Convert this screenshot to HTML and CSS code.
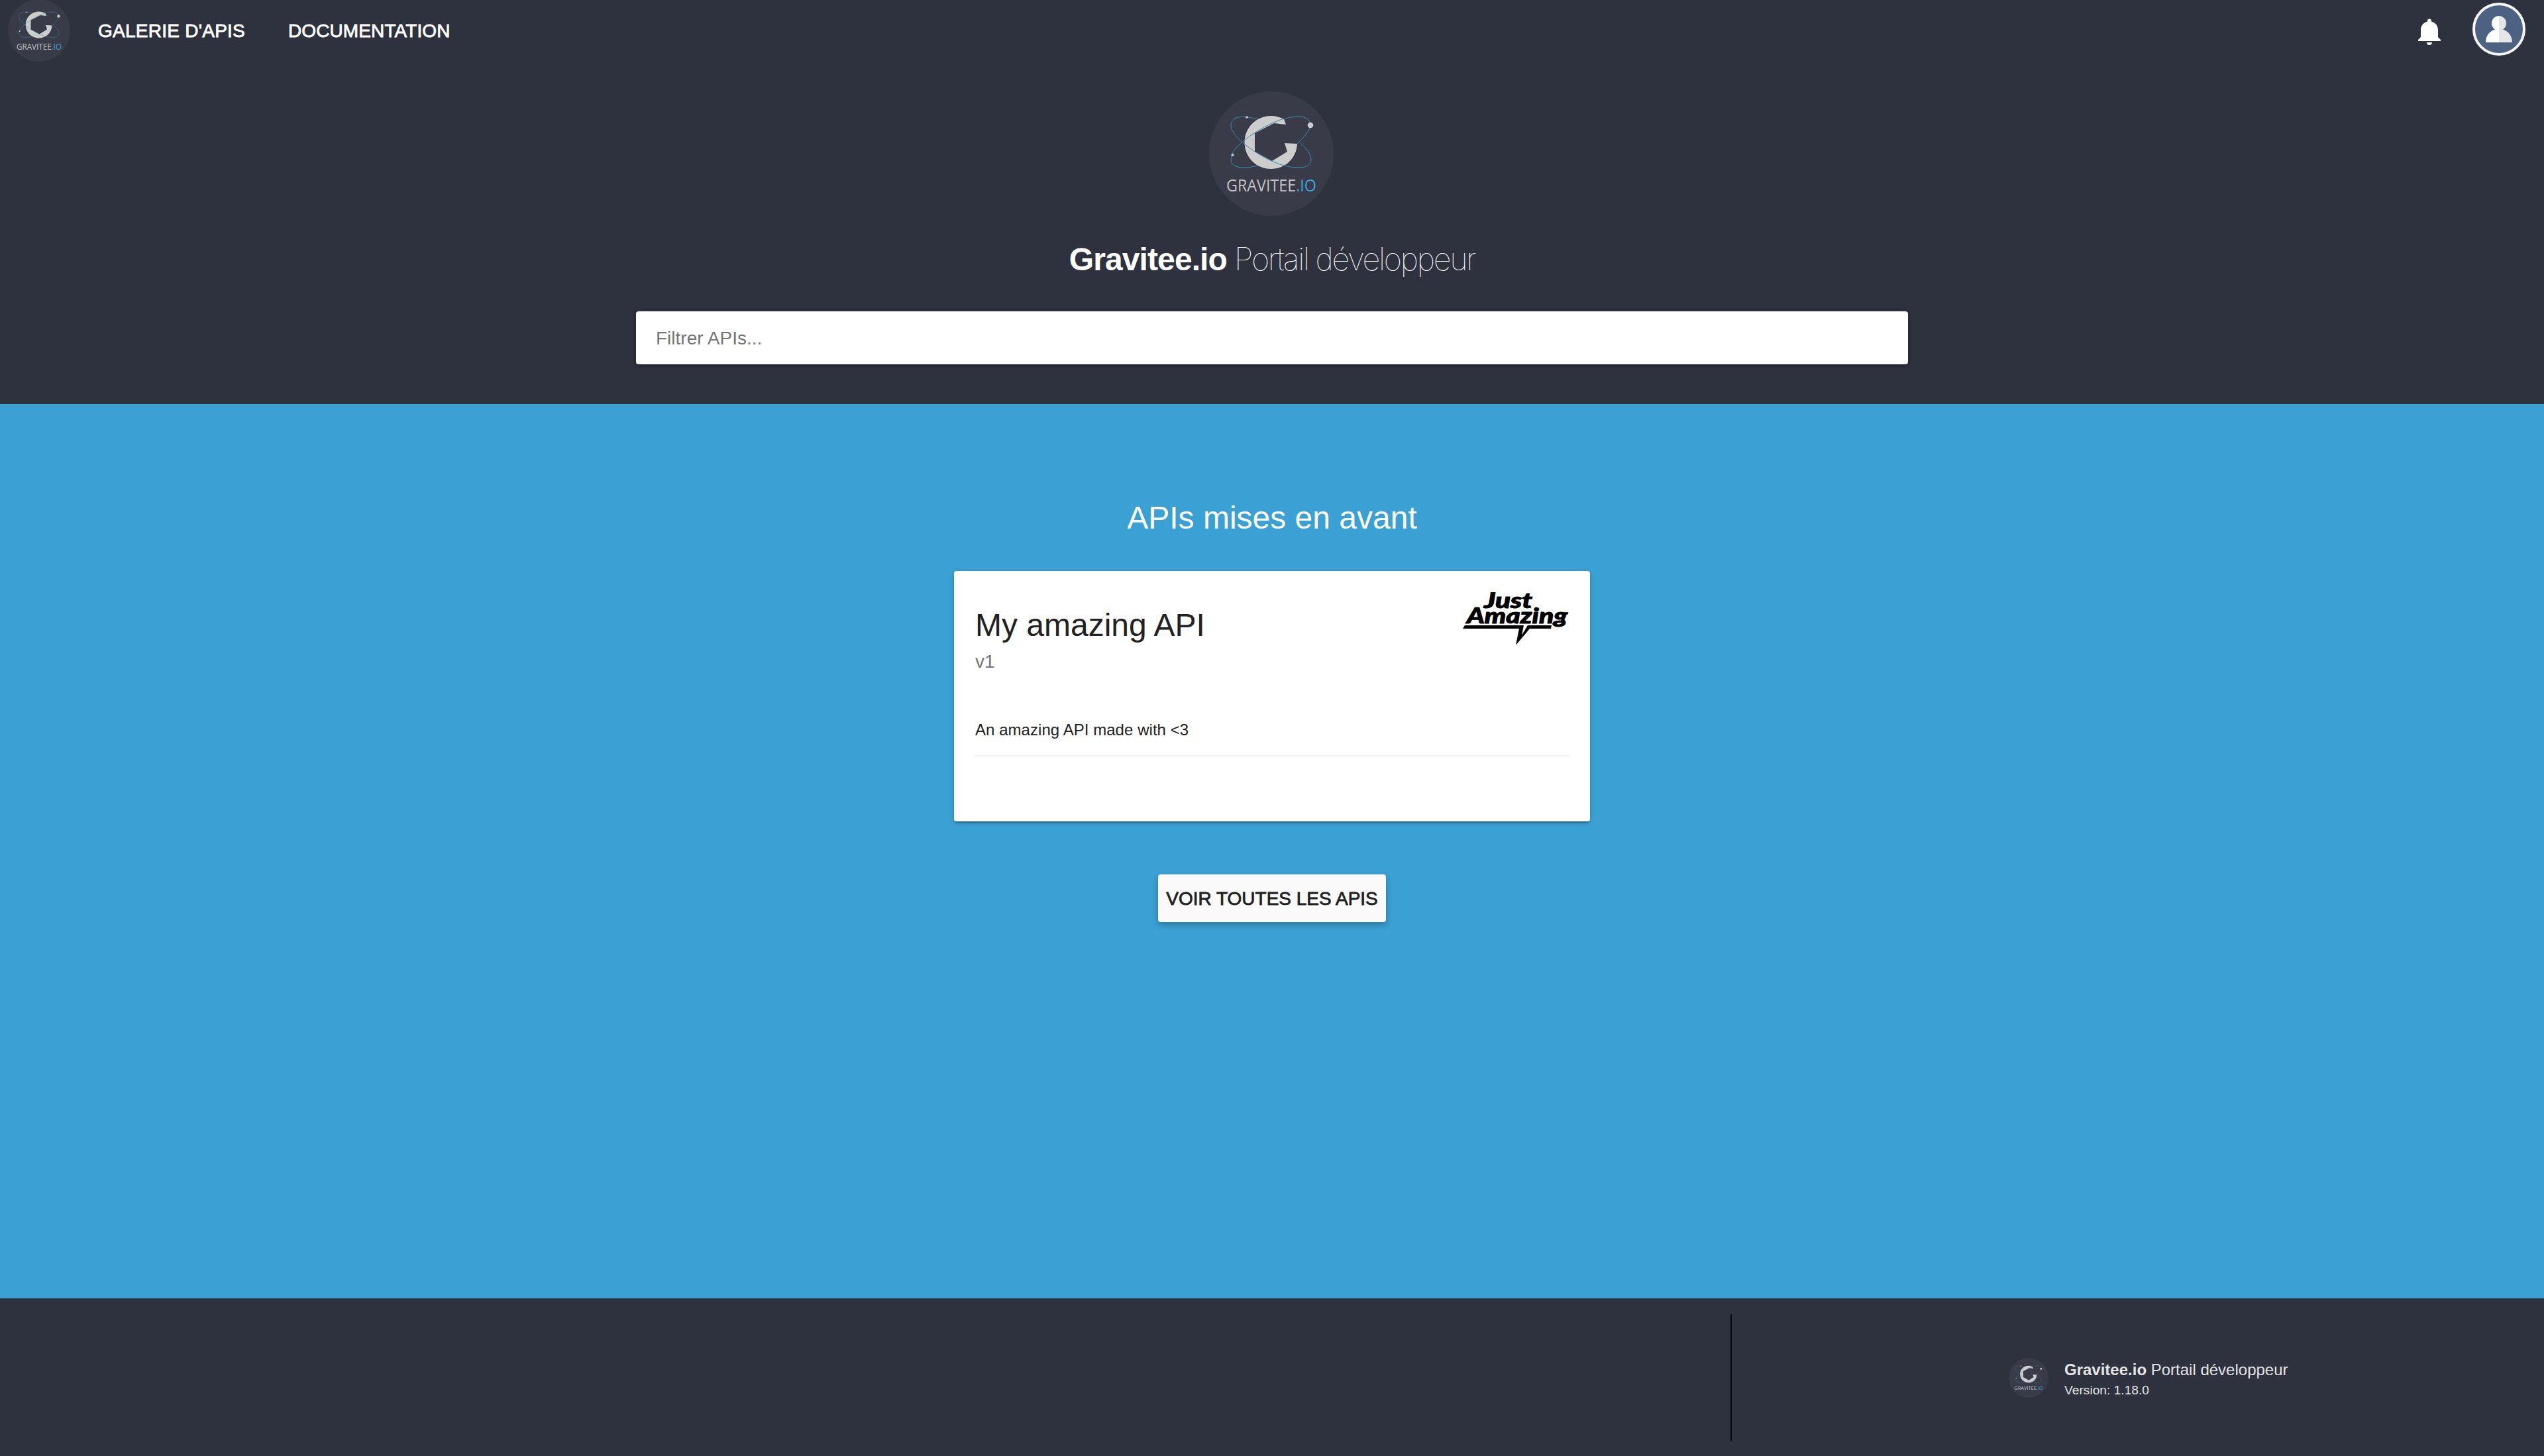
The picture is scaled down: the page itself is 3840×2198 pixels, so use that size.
FILE: index.html
```html
<!DOCTYPE html>
<html lang="fr">
<head>
<meta charset="utf-8">
<title>Gravitee.io Portail développeur</title>
<link rel="stylesheet" href="styles.css">
</head>
<body>
<svg width="0" height="0" class="defs" aria-hidden="true">
  <symbol id="gravitee" viewBox="0 0 188 188">
    <circle cx="94" cy="94" r="94" fill="#393c48"/>
    <path fill="#cdcdcd" d="M116 50L98 48L69 63V91L95 105L118 91L114 78L133 79C132 101 115 117 93.500 117C71 117 53.500 99 53.500 77C53.500 55 71 37 93.500 37C101 37 108 39 113 42Z"/>
    <g fill="none" stroke="#3889b3" stroke-width="1">
      <path d="M153 51C153 43 146 38 135 38C112 38 84 51 58 70C40 84 33 93 33 103C33 111 40 115 52 115C60 115 66 114 73 112"/>
      <path d="M73 42C66 40 59 39 52 38C40 38 33 43 33 51C33 61 44 73 62 86C87 104 113 115 135 115C147 115 154 111 154 103C154 95 147 86 137 77"/>
      <path d="M133 79C145 68 152 59 153 51"/>
    </g>
    <g fill="#cdcdcd"><circle cx="153" cy="51" r="4.300"/><circle cx="57" cy="39" r="1.800"/><circle cx="35.500" cy="96" r="2"/></g>
    <text x="26" y="151" textLength="136" lengthAdjust="spacingAndGlyphs" font-family="'Open Sans', sans-serif" font-size="25" fill="#c2c3c5">GRAVITEE<tspan fill="#36a5dd">.IO</tspan></text>
  </symbol>
</svg>

<header class="header">
  <nav class="nav">
    <svg class="nav-logo"><use href="#gravitee"/></svg>
    <a class="nav-link nav-apis">GALERIE D'APIS</a>
    <a class="nav-link">DOCUMENTATION</a>
    <div class="nav-tools">
      <svg class="bell" viewBox="0 0 34 40"><path fill="#fff" d="M14 3.500a3 3 0 0 1 6 0V4.600C26 6 30 11 30 17V28L34 32V34H0V32L4 28V17C4 11 8 6 14 4.600ZM13 36H21C21 38.500 19.500 40 17 40S13 38.500 13 36Z"/></svg>
      <svg class="avatar" viewBox="0 0 80 80"><circle cx="40" cy="40" r="38" fill="#4d6182" stroke="#f5f5f5" stroke-width="4"/><path fill="#fff" d="M40 20a11.200 11.200 0 0 0-6 20.600C26 43 20 50 20 60H40Z"/><path fill="#e6e6e6" d="M40 20a11.200 11.200 0 0 1 6 20.600C54 43 60 50 60 60H40Z"/></svg>
    </div>
  </nav>
  <div class="hero">
    <svg class="hero-logo"><use href="#gravitee"/></svg>
    <h1 class="hero-title"><b class="brand">Gravitee.io</b><span class="portal">Portail développeur</span></h1>
    <input class="search" type="text" placeholder="Filtrer APIs...">
  </div>
</header>

<main class="main">
  <h2 class="section-title">APIs mises en avant</h2>
  <article class="card">
    <div class="card-head">
      <div>
        <h3 class="card-title">My amazing API</h3>
        <p class="card-version">v1</p>
      </div>
      <svg class="card-logo" viewBox="0 0 160 80">
        <g font-family="Lato, sans-serif" font-weight="900" font-style="italic" stroke="#000" stroke-width="1">
          <text x="32" y="23.500" font-size="32" textLength="73" lengthAdjust="spacingAndGlyphs">Just</text>
          <text x="6" y="46.500" font-size="32" textLength="152" lengthAdjust="spacingAndGlyphs">Amazing</text>
        </g>
        <path d="M3 50H92L89 65L98 50H134L133 55H101L80 80L85 55H0Z"/>
      </svg>
    </div>
    <p class="card-text">An amazing API made with &lt;3</p>
  </article>
  <button class="button">VOIR TOUTES LES APIS</button>
</main>

<footer class="footer">
  <div class="about">
    <svg class="footer-logo"><use href="#gravitee"/></svg>
    <div class="about-text">
      <p class="about-name"><b>Gravitee.io</b> Portail développeur</p>
      <p class="about-version">Version: 1.18.0</p>
    </div>
  </div>
</footer>
</body>
</html>
```
FILE: styles.css
```css
* {
  box-sizing: border-box;
}

body {
  margin: 0;
  height: 2198px;
  display: flex;
  flex-direction: column;
  font-family: "Liberation Sans", Arial, sans-serif;
  color: #212121;
  background: #3ba0d3;
}

h1, h2, h3, p {
  margin: 0;
  font-weight: 400;
}

svg {
  display: block;
  flex: none;
}

.defs {
  position: absolute;
}

.header {
  height: 610px;
  background: #2d323e;
}

.nav {
  display: flex;
  align-items: center;
  height: 92px;
  padding: 0 28px 0 12px;
}

.nav-logo {
  width: 94px;
  height: 94px;
}

.nav-link {
  margin-left: 65px;
  padding-top: 1px;
  color: #fff;
  font-size: 28px;
  line-height: 32px;
  letter-spacing: 0.1px;
  -webkit-text-stroke: 0.8px currentColor;
}

.nav-apis {
  margin-left: 42px;
  letter-spacing: 0.25px;
}

.nav-tools {
  display: flex;
  align-items: center;
  margin-left: auto;
  gap: 48px;
}

.bell {
  width: 34px;
  height: 40px;
  margin-top: 4px;
}

.avatar {
  width: 80px;
  height: 80px;
  margin-bottom: 4px;
}

.hero {
  display: flex;
  flex-direction: column;
  align-items: center;
  padding-top: 46px;
}

.hero-logo {
  width: 188px;
  height: 188px;
  margin-right: 2px;
}

.hero-title {
  display: flex;
  gap: 11px;
  align-items: baseline;
  height: 56px;
  margin-top: 37px;
  line-height: 56px;
  font-size: 48px;
  color: #fff;
}

.brand {
  letter-spacing: -0.9px;
}

.portal {
  font-family: Inter, "Liberation Sans", sans-serif;
  font-size: 47px;
  font-weight: 100;
  letter-spacing: -2.35px;
}

.search {
  width: 1920px;
  height: 80px;
  margin-top: 51px;
  padding: 2px 30px 0;
  border: 0;
  border-radius: 4px;
  background: #fff;
  font: 28px "Liberation Sans", Arial, sans-serif;
  box-shadow: 0 2px 6px rgba(0, 0, 0, 0.4);
}

.search::placeholder {
  color: #757575;
}

.main {
  flex: 1;
  display: flex;
  flex-direction: column;
  align-items: center;
  padding-top: 144px;
}

.section-title {
  font-size: 48px;
  line-height: 56px;
  color: #fff;
}

.card {
  width: 960px;
  height: 378px;
  margin-top: 52px;
  padding: 32px;
  border-radius: 4px;
  background: #fff;
  box-shadow: 0 2px 6px rgba(0, 0, 0, 0.2), 0 4px 2px -2px rgba(0, 0, 0, 0.3);
}

.card-head {
  display: flex;
  justify-content: space-between;
  height: 168px;
}

.card-title {
  margin-top: 22px;
  font-size: 48px;
  line-height: 56px;
}

.card-version {
  margin-top: 11px;
  font-size: 28px;
  line-height: 32px;
  color: #757575;
}

.card-logo {
  width: 160px;
  height: 80px;
}

.card-text {
  height: 80px;
  padding-top: 26px;
  border-bottom: 2px solid #f1f1f1;
  font-size: 24px;
  line-height: 28px;
  letter-spacing: 0.05px;
}

.button {
  width: 344px;
  height: 72px;
  margin-top: 80px;
  padding: 1px 0 0;
  border: 0;
  border-radius: 4px;
  background: #fafafa;
  color: #212121;
  font: 28px "Liberation Sans", Arial, sans-serif;
  -webkit-text-stroke: 0.8px currentColor;
  box-shadow: 0 4px 10px rgba(0, 0, 0, 0.26);
}

.footer {
  display: flex;
  justify-content: flex-end;
  height: 238px;
  padding: 24px 0 22px;
  background: #2d323e;
}

.about {
  display: flex;
  align-items: center;
  width: 1228px;
  padding-left: 418px;
  border-left: 2px solid #090a0d;
  color: #e3e3e3;
}

.footer-logo {
  width: 60px;
  height: 60px;
  margin-right: 24px;
}

.about-text {
  padding-top: 6px;
}

.about-name {
  font-size: 24px;
  line-height: 32px;
}

.about-version {
  font-size: 19.2px;
  line-height: 30px;
}
```
